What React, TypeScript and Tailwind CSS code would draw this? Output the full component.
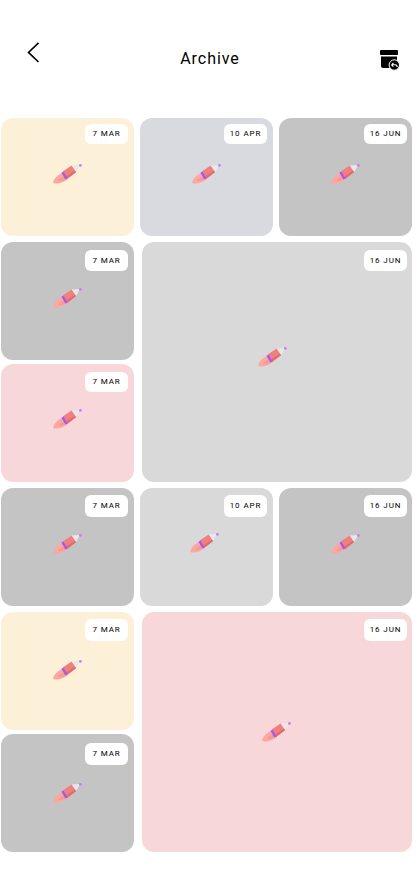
const Pencil = ({ className = "" }: { className?: string }) => (
  <svg width="30" height="20" viewBox="0 0 30 20" className={className}>
    <path d="M0.2 19C0.5 15 4 11 10 8.5L14.5 15.5C10 18.5 5 20.5 0.2 19Z" fill="#FBA9A0" />
    <path d="M5 17C6.5 14.5 8.5 13 10.5 12.5L12.5 15C10.5 16.5 7.5 17.5 5 17Z" fill="#F59A94" />
    <path d="M10 7.3L18.7 1.6L23.2 8L14 15Z" fill="#F08080" />
    <path d="M13 12.6L22.2 6.6L23.2 8L14 15Z" fill="#E26C6C" />
    <path d="M18.7 1.6L27 1L23.2 8Z" fill="#E8E8EA" />
    <path d="M9.5 8.2L13.4 15" stroke="#A855F7" strokeWidth="2.4" />
    <circle cx="27.4" cy="1.4" r="1.4" fill="#C77DF8" />
  </svg>
);

const ArchiveIcon = () => (
  <svg width="20" height="22" viewBox="0 0 20 22">
    <rect x="0" y="0" width="18" height="5" rx="1" fill="#000" />
    <path d="M1 6.5H17V16C17 17.2 16 18 15 18H3C2 18 1 17.2 1 16Z" fill="#000" />
    <circle cx="14.3" cy="15" r="5.2" fill="#000" stroke="#fff" strokeWidth="1" />
    <path d="M11.5 14.8H15.2C16.4 14.8 17.2 15.6 17.2 17M11.5 14.8L13.4 13M11.5 14.8L13.4 16.6" fill="none" stroke="#fff" strokeWidth="1.1" />
  </svg>
);

const Card = ({
  bg,
  date,
  className = "",
  pencil = "",
  badge = "",
  right = "right-[6px]",
}: {
  bg: string;
  date: string;
  className?: string;
  pencil?: string;
  badge?: string;
  right?: string;
}) => (
  <div className={`relative flex items-center justify-center rounded-[12px] ${bg} ${className}`}>
    <span
      className={`absolute flex w-[43px] items-center justify-center rounded-[6px] bg-white text-[8px] tracking-[0.9px] text-black ${right} ${badge}`}
    >
      {date}
    </span>
    <Pencil className={pencil} />
  </div>
);

const App = () => {
  return (
    <div className="h-[895px] w-[417px] overflow-hidden bg-white font-['Roboto',sans-serif]">
      <header className="flex h-[118px] justify-between pl-[27px] pr-[17px]">
        <svg width="13" height="21" viewBox="0 0 13 21" className="mt-[42px]">
          <path d="M11.5 0.8L1.5 10.4L11.5 20" fill="none" stroke="#000" strokeWidth="1.6" />
        </svg>
        <h1 className="mt-[49px] text-[16px] leading-[19px] tracking-[0.95px] text-black">Archive</h1>
        <div className="mt-[50px]">
          <ArchiveIcon />
        </div>
      </header>

      <main className="flex w-[411px] flex-col gap-[6px] ml-[1px]">
        <section className="flex gap-[6px]">
          <Card bg="bg-[#FCF0D8]" date="7 MAR" className="h-[118px] w-[133px]" badge="top-[6px] h-[20px]" pencil="-translate-y-[3px]" />
          <Card bg="bg-[#D9DADF]" date="10 APR" className="h-[118px] w-[133px]" badge="top-[6px] h-[20px]" pencil="-translate-y-[3px]" />
          <Card bg="bg-[#C4C4C4]" date="16 JUN" className="h-[118px] w-[133px]" right="right-[5px]" badge="top-[6px] h-[20px]" pencil="-translate-y-[3px]" />
        </section>

        <section className="flex gap-[8px]">
          <div className="flex w-[133px] flex-col gap-[4px]">
            <Card bg="bg-[#C4C4C4]" date="7 MAR" className="h-[118px]" badge="top-[8px] h-[21px]" pencil="-translate-y-[3px]" />
            <Card bg="bg-[#F8D7DA]" date="7 MAR" className="h-[118px]" badge="top-[8px] h-[20px]" pencil="-translate-y-[4px]" />
          </div>
          <Card bg="bg-[#D9D9D9]" date="16 JUN" className="h-[240px] w-[270px]" right="right-[5px]" badge="top-[8px] h-[21px]" pencil="-translate-x-[4px] -translate-y-[5px]" />
        </section>

        <section className="flex gap-[6px]">
          <Card bg="bg-[#C4C4C4]" date="7 MAR" className="h-[118px] w-[133px]" badge="top-[7px] h-[22px]" pencil="-translate-y-[3px]" />
          <Card bg="bg-[#D9D9D9]" date="10 APR" className="h-[118px] w-[133px]" badge="top-[7px] h-[22px]" pencil="-translate-x-[2px] -translate-y-[4px]" />
          <Card bg="bg-[#C4C4C4]" date="16 JUN" className="h-[118px] w-[133px]" right="right-[5px]" badge="top-[7px] h-[22px]" pencil="-translate-y-[3px]" />
        </section>

        <section className="flex gap-[8px]">
          <div className="flex w-[133px] flex-col gap-[4px]">
            <Card bg="bg-[#FCF0D8]" date="7 MAR" className="h-[118px]" badge="top-[7px] h-[22px]" pencil="-translate-y-[1px]" />
            <Card bg="bg-[#C4C4C4]" date="7 MAR" className="h-[118px]" badge="top-[9px] h-[22px]" />
          </div>
          <Card bg="bg-[#F8D7DA]" date="16 JUN" className="h-[240px] w-[270px]" right="right-[5px]" badge="top-[7px] h-[22px]" />
        </section>
      </main>
    </div>
  );
};

export default App;
